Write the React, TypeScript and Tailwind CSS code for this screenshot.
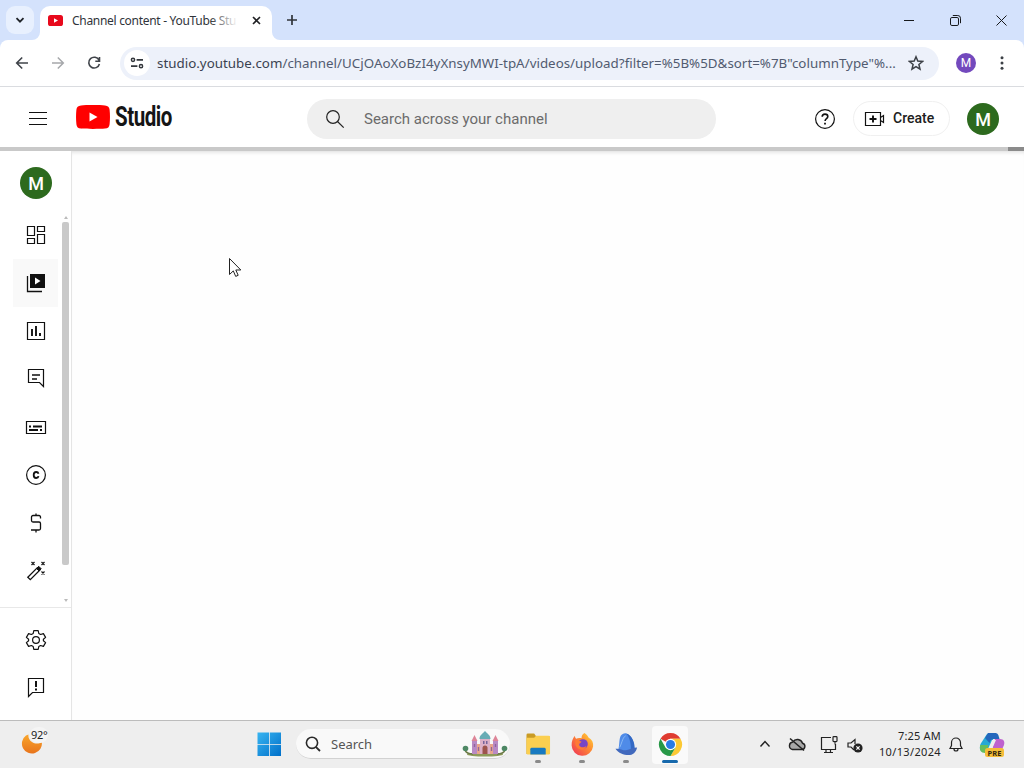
import React from "react";

interface IconProps {
  children: React.ReactNode;
  className?: string;
  box?: string;
}

const Icon: React.FC<IconProps> = ({ children, className = "w-6 h-6", box = "0 0 24 24" }) => (
  <svg
    viewBox={box}
    className={`block shrink-0 ${className}`}
    fill="none"
    stroke="currentColor"
    strokeWidth="1"
  >
    {children}
  </svg>
);

const TabStrip = () => (
  <div className="flex h-10 bg-[#d4e2fc] pl-[6px]">
    <button className="mt-[6px] flex h-7 w-7 items-center justify-center rounded-[9px] bg-[#e8f0fe]">
      <Icon className="h-3 w-3" box="0 0 12 12">
        <path d="M2.5 4.2 6 7.7l3.5-3.5" stroke="#1f2328" strokeWidth="1.8" />
      </Icon>
    </button>
    <div className="relative ml-[6px] mt-[6px] flex h-[34px] w-[232px] rounded-t-[10px] bg-white pl-[8px] pt-[1px]">
      <svg viewBox="0 0 8 8" className="absolute -left-2 bottom-0 h-2 w-2">
        <path d="M8 0v8H0a8 8 0 0 0 8-8Z" fill="#fff" />
      </svg>
      <svg viewBox="0 0 8 8" className="absolute -right-2 bottom-0 h-2 w-2">
        <path d="M0 0v8h8a8 8 0 0 1-8-8Z" fill="#fff" />
      </svg>
      <svg viewBox="0 0 15 11" className="mt-[7.5px] h-[11px] w-[15px] shrink-0">
        <rect width="15" height="11" rx="2.6" fill="#e8091c" />
        <path d="M6 3.2v4.6l4-2.3Z" fill="#fff" />
      </svg>
      <div className="relative ml-[9px] mt-[4px] h-5 w-[166px] whitespace-nowrap text-[12px] leading-5 tracking-[-0.3px] text-[#30343a]">
        Channel content - YouTube Stu
        <div className="absolute inset-y-0 right-0 w-7 bg-gradient-to-r from-white/0 to-white" />
      </div>
      <Icon className="ml-[13px] mt-[8px] h-[11px] w-[11px]" box="0 0 11 11">
        <path d="m2 2 7 7m0-7-7 7" stroke="#202124" strokeWidth="1.6" />
      </Icon>
    </div>
    <Icon className="ml-[13px] mt-[13px] h-[14px] w-[14px]" box="0 0 14 14">
      <path d="M7 2v10M2 7h10" stroke="#30343a" strokeWidth="1.7" />
    </Icon>
    <div className="ml-auto flex text-[#17191c]">
      <div className="flex w-[46px] items-center justify-center">
        <Icon className="h-[10px] w-[10px]" box="0 0 10 10">
          <path d="M0 5.5h10" />
        </Icon>
      </div>
      <div className="flex w-[46px] items-center justify-center">
        <Icon className="h-[11px] w-[11px]" box="0 0 11 11">
          <rect x=".5" y="2.5" width="8" height="8" rx="1.4" />
          <path d="M2.8.5h5a2.7 2.7 0 0 1 2.7 2.7v5" />
        </Icon>
      </div>
      <div className="flex w-[46px] items-center justify-center">
        <Icon className="h-[11px] w-[11px]" box="0 0 11 11">
          <path d="m.5.5 10 10m0-10-10 10" />
        </Icon>
      </div>
    </div>
  </div>
);

const Toolbar = () => (
  <div className="bg-[#d4e2fc]">
    <div className="flex h-[46px] items-center rounded-t-[8px] bg-white pl-[14px]">
      <Icon className="h-4 w-4 text-[#40444a]" box="0 0 16 16">
        <path d="M14 8H3m5.2-5.5L2.7 8l5.5 5.5" strokeWidth="1.6" />
      </Icon>
      <Icon className="ml-5 h-4 w-4 text-[#a6a8ab]" box="0 0 16 16">
        <path d="M2 8h11M7.8 2.5 13.3 8l-5.5 5.5" strokeWidth="1.5" />
      </Icon>
      <Icon className="ml-5 h-4 w-4 text-[#40444a]" box="0 0 16 16">
        <path d="M13 5.2A5.4 5.4 0 1 0 13.4 9M13.5 2v4.2H9.3" strokeWidth="1.6" />
      </Icon>
      <div className="ml-[18px] flex h-[33px] w-[819px] items-center rounded-full bg-[#edf1fa] pl-[4px]">
        <div className="flex h-[26px] w-[26px] items-center justify-center rounded-full bg-white">
          <Icon className="h-[14px] w-[14px] text-[#33373c]" box="0 0 14 14">
            <circle cx="3" cy="3.8" r="1.6" strokeWidth="1.5" />
            <path d="M6.6 3.8H13M1 10.2h6.4" strokeWidth="1.7" />
            <circle cx="11" cy="10.2" r="1.6" strokeWidth="1.5" />
          </Icon>
        </div>
        <div className="ml-[7px] w-[740px] whitespace-nowrap pt-px text-[13.33px] tracking-[0.02px] text-[#515b70]">
          <span className="text-[#3a4250]">studio.youtube.com</span>
          /channel/UCjOAoXoBzI4yXnsyMWI-tpA/videos/upload?filter=%5B%5D&amp;sort=%7B"columnType"%...
        </div>
        <Icon className="ml-[11px] h-4 w-4 text-[#3c4046]" box="0 0 16 16">
          <path
            d="m8 1.8 1.8 4.3 4.7.4-3.6 3 1.1 4.6L8 11.6l-4 2.5 1.1-4.6-3.6-3 4.7-.4Z"
            strokeWidth="1.5"
          />
        </Icon>
      </div>
      <div className="ml-[17px] flex h-5 w-5 items-center justify-center rounded-full bg-[#7349bd] font-[Roboto,sans-serif] text-[12px] text-white">
        M
      </div>
      <Icon className="ml-[18px] h-4 w-4" box="0 0 16 16">
        <g fill="#3c4046" stroke="none">
          <circle cx="8" cy="2.8" r="1.5" />
          <circle cx="8" cy="8" r="1.5" />
          <circle cx="8" cy="13.2" r="1.5" />
        </g>
      </Icon>
    </div>
    <div className="h-px bg-[#dadce0]" />
  </div>
);

const StudioHeader = () => (
  <div className="font-[Roboto,sans-serif]">
    <div className="flex h-[60px] items-center bg-white pl-[26px] pt-[3px]">
      <Icon className="h-6 w-6 text-[#111]">
        <path d="M3 5.5h18M3 11.5h18M3 17.5h18" />
      </Icon>
      <svg viewBox="0 0 34 24" className="mb-[3px] ml-[26px] h-6 w-[34px] shrink-0">
        <path
          d="M5 .4C10 0 24 0 29 .4c3 .2 4.3 1.6 4.6 4.4.5 4.8.5 9.6 0 14.4-.3 2.8-1.6 4.2-4.6 4.4-5 .4-19 .4-24 0-3-.2-4.3-1.6-4.6-4.4-.5-4.8-.5-9.6 0-14.4C.7 2 2 .6 5 .4Z"
          fill="#f00"
        />
        <path d="M13.5 7.5v9l8-4.500Z" fill="#fff" />
      </svg>
      <div className="mb-[2px] ml-[5px] w-[58px]">
        <span className="inline-block origin-left scale-x-[0.76] whitespace-nowrap text-[27px] font-bold leading-7 tracking-[-0.6px] text-[#151515]">
          Studio
        </span>
      </div>
      <div className="ml-[134px] flex h-10 w-[409px] items-center rounded-full bg-[#efefef] pl-4">
        <Icon className="h-6 w-6 text-[#222]">
          <circle cx="10" cy="10" r="6.3" strokeWidth="1.2" />
          <path d="m14.5 14.5 6.2 6.2" strokeWidth="1.2" />
        </Icon>
        <span className="ml-[17px] pt-px text-[15px] text-[#6b6b6b]">
          Search across your channel
        </span>
      </div>
      <Icon className="ml-[97px] h-6 w-6 text-[#111]">
        <circle cx="12" cy="12" r="9.4" strokeWidth="1.2" />
        <path d="M9.2 9.8c0-1.7 1.2-2.7 2.8-2.7s2.8 1 2.8 2.5c0 2.1-2.7 2.1-2.7 4.4" strokeWidth="1.6" />
        <path d="M12 15.8v1.8" strokeWidth="1.8" />
      </Icon>
      <button className="ml-[16px] flex h-[35px] w-[97px] items-center rounded-full border border-[#f0f0f0] pl-[9px]">
        <Icon className="h-6 w-6 text-[#111]">
          <path d="M2.5 5.5h15v13h-15zM17.5 10.5l3-2v7l-3-2" strokeWidth="1.2" />
          <path d="M10 8.5v7M6.5 12h7" strokeWidth="1.9" />
        </Icon>
        <span className="ml-[6px] text-[14px] font-medium text-[#202020]">Create</span>
      </button>
      <div className="ml-[17px] flex h-8 w-8 items-center justify-center rounded-full bg-[#2d6a1e] pt-px text-[18px] font-medium text-white">
        M
      </div>
    </div>
    <div className="flex h-[4px] justify-end bg-[#c9c9c9]">
      <div className="w-4 bg-[#8b8b8b]" />
    </div>
  </div>
);

const navItems = [
  {
    label: "Dashboard",
    icon: (
      <path d="M3.5 3.5h7v9h-7zM13.5 3.5h7v5h-7zM3.5 15.5h7v5h-7zM13.5 11.5h7v9h-7z" strokeWidth="1.2" />
    ),
  },
  {
    label: "Content",
    icon: (
      <>
        <path d="M6 3h15v14H6z" fill="#111" stroke="none" />
        <path d="M3.5 5v15.5H18" strokeWidth="1.3" />
        <path d="M11 6.500v7l5.500-3.500Z" fill="#fff" stroke="none" />
      </>
    ),
  },
  {
    label: "Analytics",
    icon: (
      <>
        <path d="M3.5 3.5h17v17h-17z" strokeWidth="1.2" />
        <path d="M8 10v7M12 7v10M16 14v3" strokeWidth="1.9" />
      </>
    ),
  },
  {
    label: "Comments",
    icon: (
      <>
        <path d="M4.5 2.5h15v17l-4-4h-11z" strokeWidth="1.2" />
        <path d="M8 8h8M8 12h5" strokeWidth="1.7" />
      </>
    ),
  },
  {
    label: "Subtitles",
    icon: (
      <>
        <path d="M2.5 6.5h19v12h-19z" strokeWidth="1.2" />
        <path d="M5 11.5h2M9 11.5h9M5 15h9M16 15h2" strokeWidth="1.8" />
      </>
    ),
  },
  {
    label: "Copyright",
    icon: (
      <>
        <circle cx="12" cy="12" r="9.4" strokeWidth="1.2" />
        <path d="M14.5 10.7C14.2 9.5 13.3 9 12.2 9c-1.7 0-2.5 1.2-2.5 3s.8 3 2.5 3c1.2 0 2.1-.6 2.3-1.8" strokeWidth="1.8" />
      </>
    ),
  },
  {
    label: "Earn",
    icon: (
      <path d="M16.5 7.5V6A1.5 1.5 0 0 0 15 4.5H9A1.5 1.5 0 0 0 7.5 6v3.5A1.500 1.500 0 0 0 9 11h6a1.5 1.5 0 0 1 1.500 1.500v5A1.5 1.5 0 0 1 15 19H7M12 2.500v2M12 19v2.500" strokeWidth="1.3" />
    ),
  },
  {
    label: "Customization",
    icon: (
      <>
        <path d="m3.8 18.2 9.4-9.4 2.5 2.5-9.4 9.4Z" strokeWidth="1.3" />
        <path d="m12.5 9.5 2.2-2.2 2.5 2.5-2.2 2.2Z" fill="#111" />
        <path d="m7.5 3 3 3m0-3-3 3M17.5 3l3 3m0-3-3 3M17.5 12.5l3 3m0-3-3 3" strokeWidth="1.2" />
      </>
    ),
  },
];

const Sidebar = () => (
  <div className="flex w-[72px] shrink-0 flex-col border-r border-[#e5e5e5] bg-white">
    <div className="ml-5 mt-4 flex h-8 w-8 shrink-0 items-center justify-center rounded-full bg-[#2d6a1e] font-[Roboto,sans-serif] text-[18px] font-medium text-white">
      M
    </div>
    <div className="mt-3 flex h-[396px] text-[#111]">
      <div className="w-[62px]">
        {navItems.map((item, index) => (
          <div
            key={item.label}
            aria-label={item.label}
            className={`ml-[13px] flex h-12 w-[45px] items-center justify-center ${
              index === 1 ? "bg-[#f9f9f9]" : ""
            }`}
          >
            <Icon>{item.icon}</Icon>
          </div>
        ))}
      </div>
      <div className="flex w-[7px] flex-col items-center">
        <svg viewBox="0 0 4 3" className="mt-[5px] h-[3px] w-1">
          <path d="M2 0 4 3H0Z" fill="#bbb" />
        </svg>
        <div className="mt-[3px] h-[343px] w-[7px] rounded-[2px] bg-[#c9c9c9]" />
        <svg viewBox="0 0 4 3" className="mt-[34px] h-[3px] w-1">
          <path d="M0 0h4L2 3Z" fill="#bbb" />
        </svg>
      </div>
    </div>
    <div className="h-px bg-[#e8e8e8]" />
    <div className="mt-2 text-[#111]">
      <div className="flex h-12 items-center justify-center">
        <Icon>
          <circle cx="12" cy="12" r="3.4" strokeWidth="1.2" />
          <path
            d="M9.8 2.6h4.4l.6 2.9 1.8 1 2.8-.9 2.2 3.8-2.2 1.9v1.4l2.2 1.9-2.2 3.8-2.8-.9-1.8 1-.6 2.9H9.800l-.6-2.9-1.800-1-2.800.9-2.200-3.800 2.200-1.900v-1.400L2.400 9.400l2.200-3.800 2.800.9 1.800-1Z"
            strokeWidth="1.2"
            strokeLinejoin="round"
          />
        </Icon>
      </div>
      <div className="flex h-12 items-center justify-center">
        <Icon>
          <path d="M4.5 20.5v-18h15v14h-11Z" strokeWidth="1.2" />
          <path d="M12 5v6M12 12.5v2" strokeWidth="2" />
        </Icon>
      </div>
    </div>
  </div>
);

const Castle = () => (
  <svg viewBox="0 0 46 28" className="h-7 w-[46px] shrink-0">
    <ellipse cx="23" cy="24.5" rx="18" ry="2" fill="#8f9b5b" />
    <path d="M3 20c1 3 4 4 8 4M43 20c-1 3-4 4-8 4" stroke="#6d7b48" strokeWidth="1.5" fill="none" />
    <circle cx="3.5" cy="18.5" r="2.8" fill="#4e8865" />
    <circle cx="42.5" cy="18.5" r="2.8" fill="#4e8865" />
    <path d="M10 11h5v13h-5zM31 11h5v13h-5z" fill="#b98ac4" />
    <path d="M15 14h16v10H15z" fill="#e9a58c" />
    <path d="M18 8h10v16H18z" fill="#dcb0c8" />
    <path d="m9.5 11 3-6 3 6ZM30.5 11l3-6 3 6Z" fill="#dd8598" />
    <path d="M17.5 9c0-4 3-5 5.5-8 2.5 3 5.5 4 5.5 8Z" fill="#68acb5" />
    <path d="M20.5 24v-6a2.5 2.5 0 0 1 5 0v6Z" fill="#9c544d" />
    <path d="M16.5 17v4M29.5 17v4M12.5 14v3M33.5 14v3" stroke="#8f669c" strokeWidth="1.3" />
    <path d="M21 11h1.500v3H21zM24 11h1.500v3H24z" fill="#77649b" />
  </svg>
);

const apps = [
  {
    name: "File Explorer",
    active: false,
    icon: (
      <>
        <path d="M.5 3A1.5 1.5 0 0 1 2 1.500h6.500l2 3h14V23H.5Z" fill="#c99b25" />
        <path d="M.5 6h8l2-2h13A1.500 1.500 0 0 1 25 5.500V22a1.5 1.5 0 0 1-1.5 1.5H2A1.5 1.5 0 0 1 .5 22Z" fill="#fbcf50" />
        <path d="M4.500 23.500V18A1.500 1.500 0 0 1 6 16.500h13a1.5 1.5 0 0 1 1.5 1.5v5.500Z" fill="#187ac1" />
      </>
    ),
  },
  {
    name: "Firefox",
    active: false,
    icon: (
      <>
        <defs>
          <linearGradient id="fox" x1="1" y1="0" x2="0" y2="1">
            <stop offset="0" stopColor="#ffdf3f" />
            <stop offset=".4" stopColor="#ff8f30" />
            <stop offset="1" stopColor="#ee2d5b" />
          </linearGradient>
        </defs>
        <path
          d="M15 1c2 1 3.5 3 4.2 4.8C23 8 24.5 11 24 15a11.2 11.2 0 0 1-22.3-1C1.5 10 3 6.5 5 4c0 1.500.8 2.500 1.500 3C8 6 10.500 6 12 6.500 12 4 13 2 15 1Z"
          fill="url(#fox)"
        />
        <circle cx="13.5" cy="12.5" r="5" fill="#7845c5" />
        <path d="M6 8.500c2.500-.5 3.500 1.200 6 1.500-.5 1.800-2.500 1.500-2.500 3.500 1 3 5 3.200 7.500 1-1 4.500-6.500 5-9.500 2-2-2-2.500-5-1.500-8Z" fill="#ff7a35" />
      </>
    ),
  },
  {
    name: "Wireshark",
    active: false,
    icon: (
      <>
        <path d="M4 20C6 15 5 8 7 4c1.500-2 3.500-3 6-2.500C19 4 21.500 11 21 20Z" fill="#4f8be8" />
        <path d="M13 1.500C19 4 22 11 21.500 19l-4 1C18 13 16.500 6 13 1.500Z" fill="#3268c4" />
        <path d="M1.500 17.500c4-1 8 2 11 1.500 4-1 7.500-3 11.500-3-1 5-4.500 8-9 8-5 0-10.500-2-13.500-6.500Z" fill="#4169bd" />
        <path d="M6 16C9 9 9 6 12 4" stroke="#8bbaf5" />
      </>
    ),
  },
  {
    name: "Chrome",
    active: true,
    icon: (
      <>
        <path d="M13 13 2.6 7A12 12 0 0 1 23.4 7H13Z" fill="#df3c31" />
        <path d="M13 7h10.400A12 12 0 0 1 13 25l5.200-9Z" fill="#fcc934" />
        <path d="M13 25A12 12 0 0 1 2.600 7l5.200 9H18.200Z" fill="#279847" />
        <circle cx="13" cy="13" r="5.9" fill="#fff" />
        <circle cx="13" cy="13" r="4.7" fill="#287be5" />
      </>
    ),
  },
];

const Taskbar = () => (
  <div className="flex h-12 border-t border-[#bcbcbc] bg-[#eeeeee]">
    <div className="relative ml-[21px] w-[30px]">
      <svg viewBox="0 0 22 22" className="mt-[11px] h-[22px] w-[22px]">
        <defs>
          <linearGradient id="moon" x1="0" y1="0" x2="0" y2="1">
            <stop offset="0" stopColor="#f9a62b" />
            <stop offset="1" stopColor="#e8741c" />
          </linearGradient>
        </defs>
        <path d="M5 3.500A10 10 0 1 0 20.800 10C18 12 14 12 11 10 8 8 7 5 7.500 2.500Z" fill="url(#moon)" />
      </svg>
      <span className="absolute left-[9px] top-[6px] rounded-full bg-[#f4f4f4] px-[1px] text-[11px] leading-4 tracking-[-0.3px] text-[#222]">
        92°
      </span>
    </div>
    <svg viewBox="0 0 24 24" className="ml-[206px] mt-[11px] h-6 w-6 shrink-0">
      <defs>
        <linearGradient id="win" x1="0" y1="0" x2="1" y2="1">
          <stop offset="0" stopColor="#38b5f1" />
          <stop offset="1" stopColor="#006fc9" />
        </linearGradient>
      </defs>
      <path d="M.5.500H12V12H.5zM12.800.500H24V12H12.800zM.5 12.800H12V24H.5zM12.800 12.800H24V24H12.800z" fill="url(#win)" />
    </svg>
    <div className="ml-[15px] mt-2 flex h-[30px] w-[214px] shrink-0 items-center rounded-full border-b border-[#d2d2d2] bg-[#f9f9f9] pl-[9px]">
      <Icon className="h-4 w-4 text-[#292929]" box="0 0 16 16">
        <circle cx="7" cy="6.8" r="5.6" strokeWidth="1.6" />
        <path d="m10.8 10.8 4.2 4.2" strokeWidth="1.8" />
      </Icon>
      <span className="ml-[10px] w-[131px] pt-[2px] text-[13px] text-[#555]">Search</span>
      <Castle />
    </div>
    <div className="ml-[10px] mt-[5px] flex gap-2">
      {apps.map((app) => (
        <div
          key={app.name}
          aria-label={app.name}
          className={`flex h-[38px] w-9 flex-col items-center rounded-[4px] pt-[6px] ${
            app.active ? "bg-[#fafafa]" : ""
          }`}
        >
          <svg viewBox="0 0 26 26" className="h-[25px] w-[25px] shrink-0" fill="none">
            {app.icon}
          </svg>
          <div
            className={`mt-[3px] h-[3px] shrink-0 rounded-full ${
              app.active ? "w-4 bg-[#1769ac]" : "w-[6px] bg-[#8a8a8a]"
            }`}
          />
        </div>
      ))}
    </div>
    <div className="ml-auto flex items-center pr-[19px] text-[#222]">
      <Icon className="h-3 w-3" box="0 0 12 12">
        <path d="m1.5 7.500 4.500-5 4.500 5" strokeWidth="1.4" />
      </Icon>
      <Icon className="ml-[17px] h-[18px] w-[18px]" box="0 0 18 18">
        <path d="M4.5 13.500h9.300a3.200 3.200 0 0 0 .7-6.300A5.400 5.400 0 0 0 4.800 6a3.800 3.800 0 0 0-.3 7.500Z" fill="#a8a8a8" strokeWidth="1.4" />
        <path d="m2 2.500 14 12" strokeWidth="1.6" />
      </Icon>
      <Icon className="ml-[14px] h-[18px] w-[18px]" box="0 0 18 18">
        <path d="M11 1.500H1.500v12h14V8M6 13.500v3M10.500 13.500v3M4 16.500h9" strokeWidth="1.2" />
        <rect x="13" y=".6" width="4" height="5" rx=".8" strokeWidth="1.2" />
        <path d="M15 5.500v3" />
      </Icon>
      <Icon className="ml-[9px] h-4 w-4" box="0 0 16 16">
        <path d="M7 13 4 10H1V6h3l4-3.500V7" strokeWidth="1.2" />
        <circle cx="11" cy="11" r="4.6" fill="#222" stroke="none" />
        <path d="m9.4 9.4 3.2 3.2m0-3.200-3.200 3.200" stroke="#fff" strokeWidth="1.2" />
      </Icon>
      <div className="-mt-[2px] ml-[6px] w-[72px] text-right text-[11px] leading-4 text-[#242424]">
        <div className="tracking-[0.2px]">7:25 AM</div>
        <div className="whitespace-nowrap tracking-[0.35px]">10/13/2024</div>
      </div>
      <Icon className="ml-[7px] h-4 w-4" box="0 0 16 16">
        <path d="M2 11.500h12l-1.500-3V5.500a4.500 4.500 0 0 0-9 0v3ZM6 12a2 2 0 0 0 4 0" strokeWidth="1.2" />
      </Icon>
      <svg viewBox="0 0 26 26" className="ml-[15px] h-[26px] w-[26px]">
        <path d="M7 3.5C8 1.500 9.500 1 12 1h4L10 20H6c-5 0-6-3-4.500-8Z" fill="#25a9d5" />
        <path d="M9 1h7c3 0 3.5 2 4.500 6h-6c-2 0-3 1-4 4L6 6Z" fill="#2467bc" />
        <path d="M16 7h5c4 0 5 3 4 6l-4 9H9c4 0 4-5 7-15Z" fill="#be62ce" />
        <path d="M1.300 13h8L8 21H6c-4 0-6-3-4.700-8Z" fill="#66bd5d" />
        <path d="M13 8h4l-4 9H9Z" fill="#eee" />
        <rect x="6" y="16" width="19" height="9" rx="2.5" fill="#f5bd38" />
        <text x="15.500" y="23.500" textAnchor="middle" fontSize="7.5" fontWeight="700" fill="#32270f">
          PRE
        </text>
      </svg>
    </div>
  </div>
);

const App = () => {
  return (
    <div className="relative flex h-[768px] w-[1024px] flex-col overflow-hidden bg-white font-['Noto_Sans','Open_Sans',sans-serif]">
      <TabStrip />
      <Toolbar />
      <StudioHeader />
      <div className="flex min-h-0 flex-1">
        <Sidebar />
        <div className="flex-1 bg-[#fefefe] shadow-[inset_0_4px_4px_-3px_rgba(0,0,0,0.14)]" />
      </div>
      <Taskbar />
      <svg viewBox="0 0 14 22" className="absolute left-[228px] top-[257px] h-[22px] w-[14px]">
        <path
          d="M1.5 1.5v16l3.800-3.600 2.400 5.500 2.500-1.100-2.400-5.300h5Z"
          fill="#fff"
          stroke="#222"
          strokeWidth="1"
        />
      </svg>
    </div>
  );
};

export default App;
